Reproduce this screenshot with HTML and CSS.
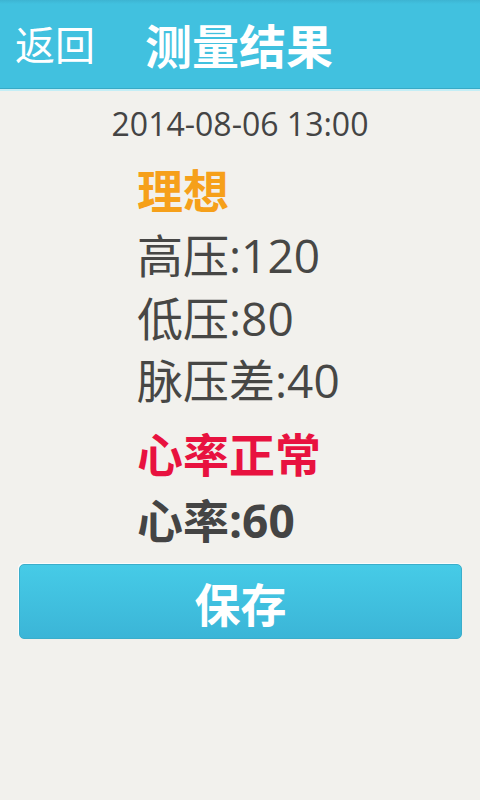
FILE: index.html
```html
<!DOCTYPE html>
<html>
<head>
<meta charset="utf-8">
<link rel="stylesheet" href="styles.css">
</head>
<body>
<header class="topbar">
  <span class="back">返回</span>
  <span class="title">测量结果</span>
</header>
<main class="content">
  <div class="date">2014-08-06 13:00</div>
  <div class="results">
    <div class="row level">理想</div>
    <div class="row r-high">高压:120</div>
    <div class="row r-low">低压:80</div>
    <div class="row r-diff">脉压差:40</div>
    <div class="row heart-state">心率正常</div>
    <div class="row heart">心率:60</div>
  </div>
  <button class="save">保存</button>
</main>
</body>
</html>
```
FILE: styles.css
```css
html, body {
  margin: 0;
  padding: 0;
}
body {
  width: 480px;
  height: 800px;
  background: #f2f1ed;
  font-family: "Open Sans", "Noto Sans CJK SC", sans-serif;
  color: #474745;
  overflow: hidden;
}
.topbar {
  height: 88px;
  background: linear-gradient(#3db4d2 0px, #41c1df 4px, #41c1df 100%);
  border-bottom: 1px solid #38aac6;
  box-shadow: 0 2px 0 #c4eef6;
  display: flex;
  align-items: center;
  padding-left: 15px;
  color: #fff;
  font-family: "Noto Sans CJK SC", sans-serif;
}
.back {
  font-size: 40px;
  line-height: 40px;
  font-weight: 400;
  margin-top: -2px;
}
.title {
  font-size: 47px;
  line-height: 47px;
  font-weight: 700;
  margin-left: 50px;
  margin-top: -2px;
}
.content {
  padding-top: 2px;
  display: flex;
  flex-direction: column;
}
.date {
  text-align: center;
  font-size: 32px;
  line-height: 66px;
  color: #444;
}
.results {
  padding-left: 137px;
  display: flex;
  flex-direction: column;
}
.row {
  font-size: 46px;
  line-height: 62px;
  white-space: nowrap;
}
.level {
  color: #f6a01a;
  font-weight: 700;
  line-height: 66px;
}
.r-high { line-height: 64px; }
.heart-state {
  color: #e8123f;
  font-weight: 700;
  margin-top: 12px;
}
.heart {
  font-weight: 700;
  color: #444;
  line-height: 70px;
}
.save {
  margin: 9px 18px 0 19px;
  height: 75px;
  border: 1px solid #3aaecb;
  border-radius: 5px;
  background: linear-gradient(#46cbe7, #3bb5d7);
  box-shadow: -1px -1px 0 #fafcfc;
  color: #fff;
  font-family: "Noto Sans CJK SC", sans-serif;
  font-size: 46px;
  font-weight: 700;
  line-height: 70px;
  padding: 0;
}
```
